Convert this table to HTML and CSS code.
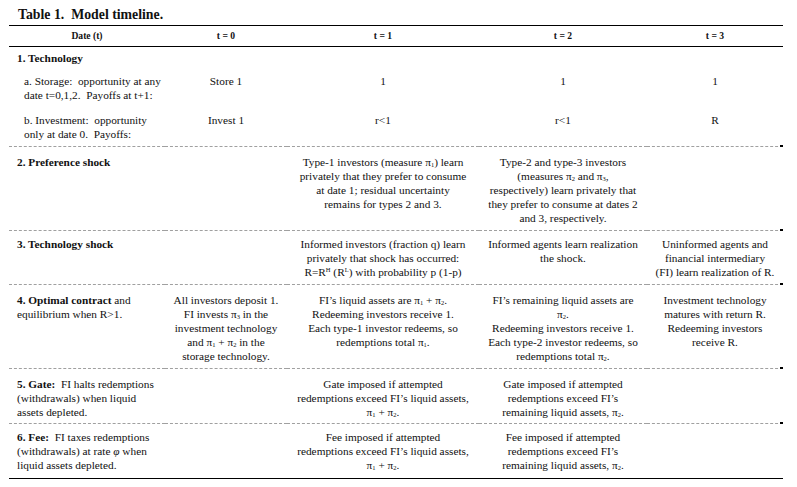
FILE: index.html
```html
<!DOCTYPE html>
<html>
<head>
<meta charset="utf-8">
<link rel="stylesheet" href="styles.css">
</head>
<body>
<div class="page">
  <h1 class="title">Table 1.&nbsp; Model timeline.</h1>
  <table class="timeline">
    <colgroup>
      <col class="c1"><col class="c2"><col class="c3"><col class="c4"><col class="c5">
    </colgroup>
    <thead>
      <tr>
        <th>Date (t)</th><th>t = 0</th><th>t = 1</th><th>t = 2</th><th>t = 3</th>
      </tr>
    </thead>
    <tbody>
      <tr class="sec-head">
        <td class="label"><b>1. Technology</b></td><td></td><td></td><td></td><td></td>
      </tr>
      <tr class="sub sub-a">
        <td class="label sublabel">a. Storage:&nbsp; opportunity at any<br>date t=0,1,2.&nbsp; Payoffs at t+1:</td>
        <td>Store 1</td><td>1</td><td>1</td><td>1</td>
      </tr>
      <tr class="sub sub-b dashed">
        <td class="label sublabel">b. Investment:&nbsp; opportunity<br>only at date 0.&nbsp; Payoffs:</td>
        <td>Invest 1</td><td>r&lt;1</td><td>r&lt;1</td><td class="end">R</td>
      </tr>
      <tr class="row r2 dashed">
        <td class="label"><b>2. Preference shock</b></td>
        <td></td>
        <td>Type-1 investors (measure π<sub>1</sub>) learn<br>privately that they prefer to consume<br>at date 1; residual uncertainty<br>remains for types 2 and 3.</td>
        <td>Type-2 and type-3 investors<br>(measures π<sub>2</sub> and π<sub>3</sub>,<br>respectively) learn privately that<br>they prefer to consume at dates 2<br>and 3, respectively.</td>
        <td class="end"></td>
      </tr>
      <tr class="row r3 dashed">
        <td class="label"><b>3. Technology shock</b></td>
        <td></td>
        <td>Informed investors (fraction q) learn<br>privately that shock has occurred:<br>R=R<sup>H</sup> (R<sup>L</sup>) with probability p (1-p)</td>
        <td>Informed agents learn realization<br>the shock.</td>
        <td class="end">Uninformed agents and<br>financial intermediary<br>(FI) learn realization of R.</td>
      </tr>
      <tr class="row r4 dashed">
        <td class="label"><b>4. Optimal contract</b> and<br>equilibrium when R&gt;1.</td>
        <td>All investors deposit 1.<br>FI invests π<sub>3</sub> in the<br>investment technology<br>and π<sub>1</sub> + π<sub>2</sub> in the<br>storage technology.</td>
        <td>FI’s liquid assets are π<sub>1</sub> + π<sub>2</sub>.<br>Redeeming investors receive 1.<br>Each type-1 investor redeems, so<br>redemptions total π<sub>1</sub>.</td>
        <td>FI’s remaining liquid assets are<br>π<sub>2</sub>.<br>Redeeming investors receive 1.<br>Each type-2 investor redeems, so<br>redemptions total π<sub>2</sub>.</td>
        <td class="end">Investment technology<br>matures with return R.<br>Redeeming investors<br>receive R.</td>
      </tr>
      <tr class="row r5 dashed">
        <td class="label"><b>5. Gate:</b>&nbsp; FI halts redemptions<br>(withdrawals) when liquid<br>assets depleted.</td>
        <td></td>
        <td>Gate imposed if attempted<br>redemptions exceed FI’s liquid assets,<br>π<sub>1</sub> + π<sub>2</sub>.</td>
        <td>Gate imposed if attempted<br>redemptions exceed FI’s<br>remaining liquid assets, π<sub>2</sub>.</td>
        <td class="end"></td>
      </tr>
      <tr class="row r6 last">
        <td class="label"><b>6. Fee:</b>&nbsp; FI taxes redemptions<br>(withdrawals) at rate <i>φ</i> when<br>liquid assets depleted.</td>
        <td></td>
        <td>Fee imposed if attempted<br>redemptions exceed FI’s liquid assets,<br>π<sub>1</sub> + π<sub>2</sub>.</td>
        <td>Fee imposed if attempted<br>redemptions exceed FI’s<br>remaining liquid assets, π<sub>2</sub>.</td>
        <td></td>
      </tr>
    </tbody>
  </table>
</div>
</body>
</html>
```

FILE: styles.css
```css
html, body {
  margin: 0;
  padding: 0;
  background: #ffffff;
}

body {
  font-family: "Liberation Serif", "Times New Roman", serif;
  color: #111;
}

.page {
  width: 797px;
  height: 487px;
  overflow: hidden;
}

.title {
  margin: 0;
  padding: 8px 0 0 18px;
  height: 17px;
  font-size: 13.8px;
  line-height: 14px;
  font-weight: bold;
}

.timeline {
  margin-left: 9px;
  width: 774px;
  table-layout: fixed;
  border-collapse: collapse;
  font-size: 11.3px;
  line-height: 14px;
}

.c1 { width: 156px; }
.c2 { width: 122px; }
.c3 { width: 192px; }
.c4 { width: 168px; }
.c5 { width: 136px; }

.timeline thead tr {
  border-top: 1.5px solid #000;
  border-bottom: 1px solid #000;
}

.timeline th {
  height: 20px;
  padding: 0;
  font-size: 9.6px;
  font-weight: bold;
  text-align: center;
  vertical-align: middle;
}

.timeline td {
  padding: 0;
  text-align: center;
  vertical-align: top;
  white-space: nowrap;
}

.timeline td.label {
  text-align: left;
  padding-left: 8px;
}

.timeline td.sublabel {
  padding-left: 15px;
}

.sec-head td { padding-top: 4px; }
.sub-a td { padding-top: 9px; }
.sub-b td { padding-top: 11px; padding-bottom: 5px; }

.row td { padding-top: 8px; padding-bottom: 5px; }
.r3 td { padding-top: 6px; }
.r4 td { padding-top: 8px; padding-bottom: 5px; }
.r5 td { padding-top: 8px; padding-bottom: 4px; }
.r6 td { padding-top: 6px; padding-bottom: 6px; }

tr.dashed {
  border-bottom: 1px dashed #a0a0a0;
}

tr.dashed td.end {
  position: relative;
}

tr.dashed td.end::after {
  content: "";
  position: absolute;
  right: 0;
  bottom: -1px;
  width: 3px;
  height: 2px;
  background: #000;
}

tr.last {
  border-bottom: 1.5px solid #000;
}

sub {
  font-size: 6.5px;
  line-height: 0;
  vertical-align: baseline;
  position: relative;
  top: 1px;
}

sup {
  font-size: 6.5px;
  line-height: 0;
  vertical-align: baseline;
  position: relative;
  top: -4px;
}
```
